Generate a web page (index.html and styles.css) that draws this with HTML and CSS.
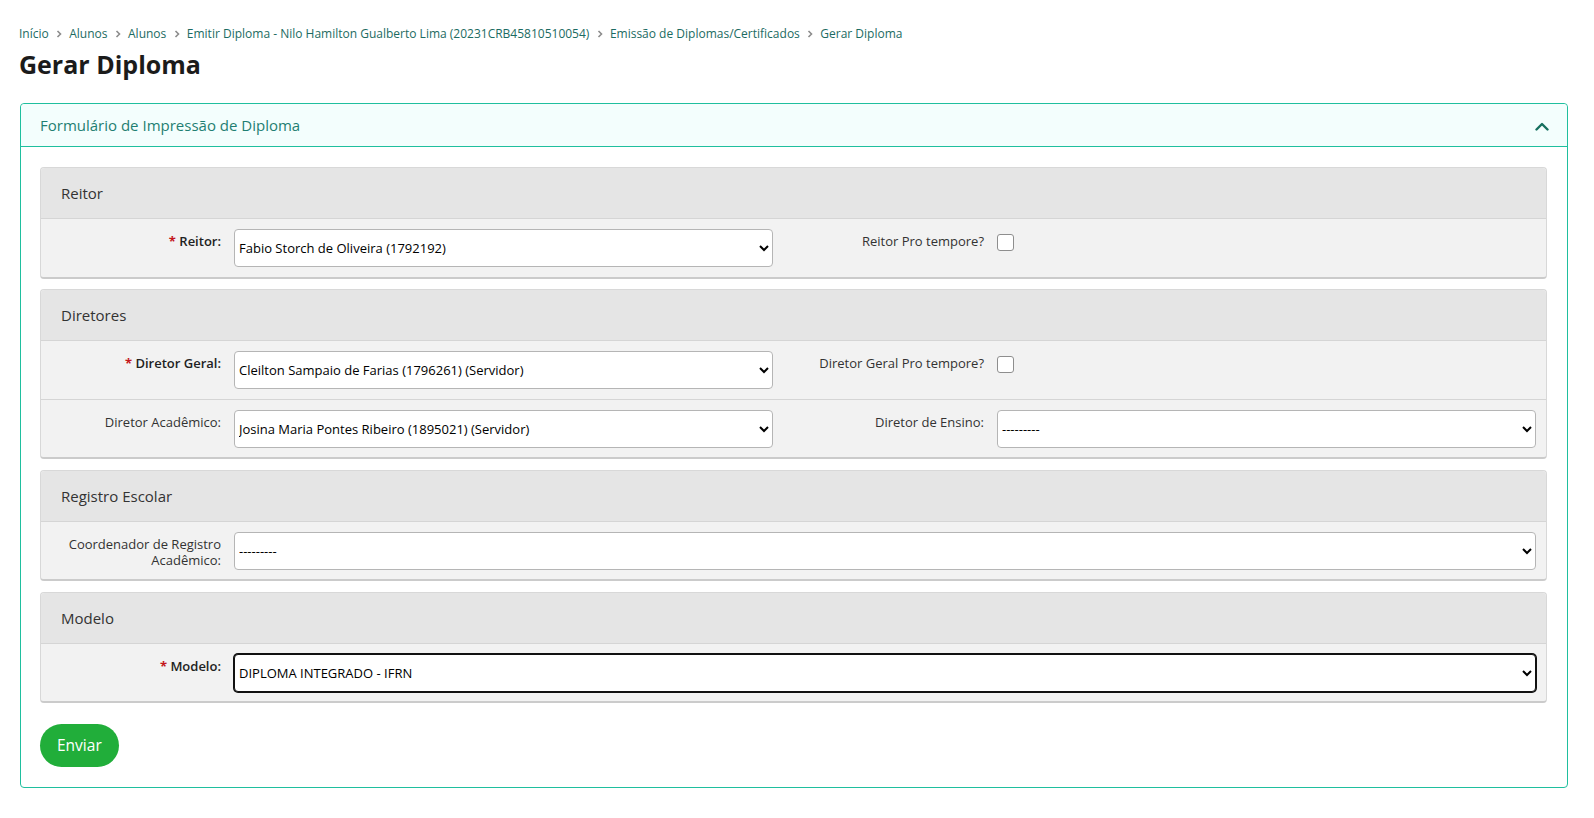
FILE: index.html
```html
<!DOCTYPE html>
<html lang="pt-BR">
<head>
<meta charset="utf-8">
<title>Gerar Diploma</title>
<link rel="stylesheet" href="styles.css">
</head>
<body>
<div class="page">
  <nav class="breadcrumbs">
    <a href="#">Início</a>
    <svg class="sep" viewBox="0 0 6 8" width="6" height="8"><path d="M1.5 1 L4.5 4 L1.5 7" /></svg>
    <a href="#">Alunos</a>
    <svg class="sep" viewBox="0 0 6 8" width="6" height="8"><path d="M1.5 1 L4.5 4 L1.5 7" /></svg>
    <a href="#">Alunos</a>
    <svg class="sep" viewBox="0 0 6 8" width="6" height="8"><path d="M1.5 1 L4.5 4 L1.5 7" /></svg>
    <a href="#">Emitir Diploma - Nilo Hamilton Gualberto Lima (20231CRB45810510054)</a>
    <svg class="sep" viewBox="0 0 6 8" width="6" height="8"><path d="M1.5 1 L4.5 4 L1.5 7" /></svg>
    <a href="#">Emissão de Diplomas/Certificados</a>
    <svg class="sep" viewBox="0 0 6 8" width="6" height="8"><path d="M1.5 1 L4.5 4 L1.5 7" /></svg>
    <span class="current">Gerar Diploma</span>
  </nav>

  <h1 class="page-title">Gerar Diploma</h1>

  <section class="card">
    <header class="card-header">
      <h2 class="card-title">Formulário de Impressão de Diploma</h2>
      <svg class="collapse-icon" viewBox="0 0 14 9" width="14" height="9"><path d="M1.5 7.5 L7 2 L12.5 7.5" /></svg>
    </header>

    <form class="card-body">
      <fieldset class="group">
        <div class="group-title">Reitor</div>
        <div class="form-row">
          <label class="field-label required">Reitor:</label>
          <div class="field">
            <select class="select"><option selected>Fabio Storch de Oliveira (1792192)</option></select>
          </div>
          <label class="field-label">Reitor Pro tempore?</label>
          <div class="field">
            <input type="checkbox" class="check">
          </div>
        </div>
      </fieldset>

      <fieldset class="group">
        <div class="group-title">Diretores</div>
        <div class="form-row">
          <label class="field-label required">Diretor Geral:</label>
          <div class="field">
            <select class="select"><option selected>Cleilton Sampaio de Farias (1796261) (Servidor)</option></select>
          </div>
          <label class="field-label">Diretor Geral Pro tempore?</label>
          <div class="field">
            <input type="checkbox" class="check">
          </div>
        </div>
        <div class="form-row">
          <label class="field-label">Diretor Acadêmico:</label>
          <div class="field">
            <select class="select"><option selected>Josina Maria Pontes Ribeiro (1895021) (Servidor)</option></select>
          </div>
          <label class="field-label">Diretor de Ensino:</label>
          <div class="field">
            <select class="select"><option selected>---------</option></select>
          </div>
        </div>
      </fieldset>

      <fieldset class="group">
        <div class="group-title">Registro Escolar</div>
        <div class="form-row">
          <label class="field-label">Coordenador de Registro Acadêmico:</label>
          <div class="field field-wide">
            <select class="select"><option selected>---------</option></select>
          </div>
        </div>
      </fieldset>

      <fieldset class="group">
        <div class="group-title">Modelo</div>
        <div class="form-row">
          <label class="field-label required">Modelo:</label>
          <div class="field field-wide">
            <select class="select select-focus"><option selected>DIPLOMA INTEGRADO - IFRN</option></select>
          </div>
        </div>
      </fieldset>

      <div class="actions">
        <button type="button" class="btn-submit">Enviar</button>
      </div>
    </form>
  </section>
</div>
</body>
</html>
```

FILE: styles.css
```css
* {
  box-sizing: border-box;
}

html, body {
  margin: 0;
  background: #ffffff;
}

body {
  font-family: "Open Sans", "Noto Sans", "Liberation Sans", sans-serif;
  color: #333333;
}

.page {
  padding: 25px 26px 20px 19px;
}

/* breadcrumbs */
.breadcrumbs {
  display: flex;
  align-items: center;
  font-size: 12px;
  line-height: 18px;
  height: 18px;
}

.breadcrumbs a,
.breadcrumbs .current {
  color: #1c6b62;
  text-decoration: none;
  white-space: nowrap;
}

.breadcrumbs .sep {
  margin: 0 7px 0 7.5px;
  fill: none;
  stroke: #8c8c8c;
  stroke-width: 1.6;
}

.page-title {
  margin: 5px 0 0 0;
  font-size: 25px;
  line-height: 32px;
  font-weight: 700;
  color: #1b1b1b;
}

/* card */
.card {
  margin: 23px 0 0 1px;
  border: 1px solid #1fbf9e;
  border-radius: 4px;
  background: #ffffff;
}

.card-header {
  display: flex;
  align-items: center;
  justify-content: space-between;
  padding: 11px 19px 11px 19px;
  background: #f3fefd;
  border-bottom: 1px solid #1fbf9e;
  border-radius: 4px 4px 0 0;
}

.card-title {
  margin: 0;
  font-size: 15px;
  line-height: 20px;
  font-weight: 400;
  color: #1f7f72;
}

.collapse-icon {
  margin-right: -1px;
  margin-top: 3px;
  fill: none;
  stroke: #16705f;
  stroke-width: 2.4;
  stroke-linecap: round;
  stroke-linejoin: round;
}

.card-body {
  padding: 20px 20px 20px 19px;
  margin: 0;
}

/* field groups */
.group {
  margin: 0 0 10.5px 0;
  padding: 0;
  min-width: 0;
  border: 1px solid #d8d8d8;
  border-bottom: 2px solid #cbcbcb;
  border-radius: 4px;
  background: #f2f2f2;
  overflow: hidden;
}

.group-title {
  height: 50px;
  display: flex;
  align-items: center;
  padding: 0 20px;
  background: #e5e5e5;
  font-size: 15px;
  color: #333333;
}

.form-row {
  display: grid;
  grid-template-columns: 193px 539px 224px 539px;
  padding: 10px 10px 9.5px 0;
  border-top: 1px solid #d5d5d5;
}

.field-label {
  padding: 4px 13px 0 0;
  text-align: right;
  font-size: 13px;
  line-height: 16px;
  color: #333333;
}

.field-label.required {
  font-weight: 600;
  color: #222222;
}

.field-label.required::before {
  content: "* ";
  color: #c4161c;
  font-weight: 700;
}

.field-wide {
  grid-column: 2 / 5;
}

.select {
  display: block;
  width: 100%;
  height: 38px;
  padding: 0 2px 0 0;
  border: 1px solid #b5b5b5;
  border-radius: 4px;
  background-color: #ffffff;
  font-family: "Open Sans", "Noto Sans", "Liberation Sans", sans-serif;
  font-size: 13px;
  color: #000000;
}

.select-focus {
  border-color: #111111;
  box-shadow: 0 0 0 1px #111111;
}

.check {
  appearance: none;
  -webkit-appearance: none;
  display: block;
  width: 17px;
  height: 17px;
  margin: 5px 0 0 0;
  border: 1px solid #8e8e8e;
  border-radius: 3px;
  background: #ffffff;
}

/* actions */
.actions {
  padding-top: 10px;
}

.btn-submit {
  display: block;
  height: 43px;
  padding: 0 17px;
  border: 0;
  border-radius: 22px;
  background: #21ae3a;
  color: #ffffff;
  font-family: "Open Sans", "Noto Sans", "Liberation Sans", sans-serif;
  font-size: 15.5px;
}
```
